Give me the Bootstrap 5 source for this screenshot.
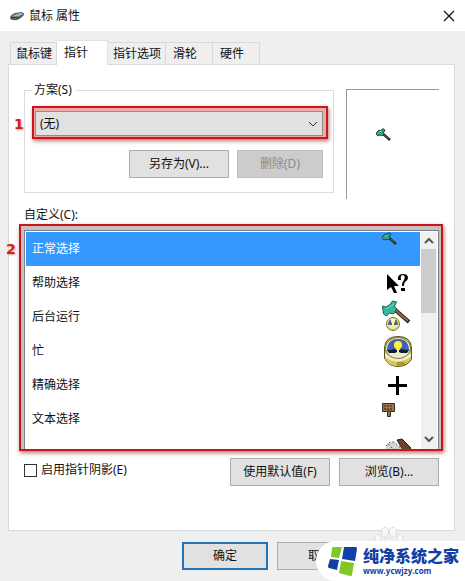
<!DOCTYPE html>
<html lang="zh-CN">
<head>
<meta charset="utf-8">
<meta name="viewport" content="width=device-width, initial-scale=1">
<title>鼠标 属性</title>
<link href="https://cdn.jsdelivr.net/npm/bootstrap@5.3.0/dist/css/bootstrap.min.css" rel="stylesheet">
<style>
body{font-family:"Noto Sans","Noto Sans CJK SC",sans-serif;font-size:12px;line-height:16px;color:#111;background:#efefef;min-height:100vh;overflow:hidden}
.titlebar{height:31px;padding:0 9px}
.titlebar h1{font-size:12px;line-height:16px;font-weight:400}
.closer{width:14px;height:14px}
.sheet{margin:9px 10px 11px 8px}
.tabs{padding-left:2px;height:24px;border:0}
.tabs .nav-link{height:22px;padding:0 4px 0 5px;border:1px solid #d9d9d9;border-left-width:0;border-bottom:0;border-radius:0;background:#efefef;color:#111;line-height:22px;text-align:left;margin:0}
.tabs .nav-item:first-child .nav-link{border-left-width:1px}
.tabs .wide{padding:0 15px 0 7px}
.tabs .nav-link.active{height:25px;width:51px;padding:0 7px;margin-bottom:-1px;background:#fff;color:#111;position:relative}
.panel{border:1px solid #d9d9d9;padding:17px 15px 44px}
.group{border:1px solid #dcdcdc;padding:0 5px 0 7px;height:111px;min-width:0}
.group legend{float:none;width:auto;font-size:12px;line-height:16px;padding:0 4px 0 2px;margin:0;height:16px}
.preview{flex:0 0 93px;height:110px;margin-top:7px;border-top:1px solid #999;border-left:1px solid #999;padding:38px 0 0 29px}
.marked{border:2px solid #c4181c;box-shadow:1px 2px 4px rgba(130,30,30,.6);position:relative}
.mark-select{background:#f4aaa4;padding:3px 3px 1px 1px}
.mark-list{background:#cabfbd;padding:4px 2px 0 3px;margin:0 -4px 0 -5px}
.step{position:absolute;color:#d2201f;font:bold 14px/16px "DejaVu Sans",sans-serif;text-shadow:1px 1px 2px #d99}
.step-one{left:-20px;top:8px}
.step-two{left:-15px;top:15px}
.scheme{height:25px;padding:0 24px 0 4px;border:1px solid #8d8d8d;border-radius:0;background-color:#e1e1e1;font-size:12px;line-height:16px;color:#111;background-image:url("data:image/svg+xml,%3csvg xmlns='http://www.w3.org/2000/svg' viewBox='0 0 10 10'%3e%3cpath fill='none' stroke='%23333' d='M1 3l4 4 4-4'/%3e%3c/svg%3e");background-size:10px;background-position:right 4px center}
.scheme-actions{padding:11px 5px 0 0}
.push{height:28px;width:100px;padding:0;border:1px solid #adadad;border-radius:0;background:#e1e1e1;color:#111;font-size:12px;line-height:16px}
.push.narrow{width:86px}
.push:disabled{background:#ccc;border-color:#bfbfbf;color:#8b8b8b;opacity:1}
.push.primary{border:2px solid #2473b5}
.caption{margin:8px 0 1px}
.listing{height:219px;border:1px solid #7d828a;border-bottom:0;padding:1px 1px 0 1px}
.listing .list-group-item{flex:none;height:34px;padding:0 6px;border:0;border-radius:0;font-size:12px;line-height:16px;color:#111}
.listing .list-group-item.active{background:#3399ff;color:#fff;margin:0}
.scroll{width:16px;margin-left:1px;background:#f0f0f0}
.scroll button{width:16px;height:17px}
.thumb{height:64px;margin-right:1px;background:#cdcdcd}
.options{margin-top:7px}
.spaced{gap:9px}
.form-check-input.tick{width:13px;height:13px;border:1px solid #333;border-radius:0;margin:0}
.actions{padding-left:182px}
.brand{position:absolute;right:0;bottom:0;width:149px;height:40px;padding:5px 0 3px 11px;border-radius:20px 0 0 20px;background:#fff;color:#123fa6}
.brand-name{font:900 16px/19px "Noto Sans CJK SC",sans-serif;white-space:nowrap}
.brand-url{font:bold 8px/12px "Open Sans",sans-serif;color:#123fa6}
.paw{position:absolute;right:61px;bottom:33px}
svg{display:block;flex:none}
</style>
</head>
<body class="position-relative d-flex flex-column">
<svg width="0" height="0" class="position-absolute" aria-hidden="true">
  <symbol id="axe" viewBox="0 0 15 14">
    <path d="M6 5l8 7" stroke="#30291d" stroke-width="2.4"/>
    <path d="M7 6l6 5" stroke="#79663a" stroke-width=".7"/>
    <path d="M1 4l2-2 2 1 1-2h2l1 2-2 1 1 2-2 2-2-1-2 1-2-2z" fill="#36a58c" stroke="#174b45"/>
    <path d="M3 4l3-1" stroke="#6bd0b1"/>
  </symbol>
</svg>
<header class="titlebar bg-white d-flex align-items-center">
  <svg class="me-1" width="16" height="12" viewBox="0 0 16 12" aria-hidden="true"><path d="M1 8Q1 5 6 3l6-1q4 1 3 3-2 3-7 5-6 1-7-2z" fill="#55636b"/><path d="M3 6l8-3q3 0 3 1-3 2-8 3z" fill="#a9b9bd"/><path d="M2 8l5-1 3 2" fill="none" stroke="#303c43"/></svg>
  <h1 class="m-0">鼠标 属性</h1>
  <button type="button" class="closer border-0 bg-transparent p-0 ms-auto" aria-label="关闭"><svg width="14" height="14" viewBox="0 0 14 14"><path d="M2 2l10 10M12 2L2 12" stroke="#111" stroke-width="1.2"/></svg></button>
</header>
<main class="sheet">
  <ul class="tabs nav nav-tabs flex-nowrap align-items-end" role="tablist">
    <li class="nav-item"><button type="button" class="nav-link" role="tab">鼠标键</button></li>
    <li class="nav-item"><button type="button" class="nav-link active" role="tab" aria-selected="true">指针</button></li>
    <li class="nav-item"><button type="button" class="nav-link" role="tab">指针选项</button></li>
    <li class="nav-item"><button type="button" class="nav-link wide" role="tab">滑轮</button></li>
    <li class="nav-item"><button type="button" class="nav-link wide" role="tab">硬件</button></li>
  </ul>
  <section class="panel bg-white">
    <div class="d-flex align-items-start">
      <fieldset class="group flex-grow-1 me-2">
        <legend>方案(S)</legend>
        <div class="marked mark-select mt-2">
          <span class="step step-one">1</span>
          <select class="scheme form-select" aria-label="方案(S)"><option>(无)</option></select>
        </div>
        <div class="scheme-actions d-flex justify-content-end gap-2">
          <button type="button" class="push btn">另存为(V)...</button>
          <button type="button" class="push narrow btn" disabled>删除(D)</button>
        </div>
      </fieldset>
      <div class="preview ms-1"><svg width="15" height="14"><use href="#axe"/></svg></div>
    </div>
    <div class="caption" id="custom">自定义(C):</div>
    <div class="marked mark-list">
      <span class="step step-two">2</span>
      <div class="listing bg-white d-flex overflow-hidden">
        <div class="list-group rounded-0 flex-grow-1 overflow-hidden" role="listbox" aria-labelledby="custom">
          <button type="button" role="option" aria-selected="true" class="list-group-item active d-flex align-items-center justify-content-between">正常选择<svg width="32" height="34"><use href="#axe" width="15" height="14"/></svg></button>
          <button type="button" role="option" class="list-group-item d-flex align-items-center justify-content-between">帮助选择<svg width="32" height="34" viewBox="0 0 32 34"><path d="M5 8v16l4-3 3 6h3l-3-7h5z"/><path d="M16 14v-3q1-3 5-3 5 0 5 4 0 2-3 4-1 1-1 4h-2q0-4 2-6 2-4-1-5-3 0-2 5z"/><path d="M19 22h4v3h-4z"/></svg></button>
          <button type="button" role="option" class="list-group-item d-flex align-items-center justify-content-between">后台运行<svg width="32" height="34" viewBox="0 0 32 34"><path d="M11 8l16 14" stroke="#30251a" stroke-width="4"/><path d="M12 9l14 12" stroke="#8f6c45" stroke-width="2"/><path d="M.5 6l3 1 4-2 3-4 4 1-2 4 2 3-3 5-4-1-3 3-3-2z" fill="#39b99b" stroke="#176251"/><path d="M4 9l8-5" stroke="#72d9bb"/><circle cx="11" cy="24" r="6.500" fill="#eeeaa8" stroke="#77721d"/><path d="M6 25q0-6 5-6t5 6z" fill="#53618b"/><path d="M9 19h4v3l-1 1v3h-2v-3l-1-1z" fill="#fff6a2"/><path d="M6 27q5 5 10 0" fill="none" stroke="#c8c05c"/></svg></button>
          <button type="button" role="option" class="list-group-item d-flex align-items-center justify-content-between">忙<svg width="32" height="34" viewBox="0 0 32 34"><path d="M2.500 14Q3 2.500 16 2.500T29.500 14v11q-4 7.500-14 7.500-10-.5-13-8.500z" fill="#c6bb4b" stroke="#55501a"/><path d="M3 19q12 11 26 0v4q-4 5-14 5-9 0-12-5z" fill="#f0edca"/><path d="M3 23q12 9 26 0v2q-4 7-14 7-9 0-12-7z" fill="#d0c75e"/><path d="M15 28h8v3l-8 1z" fill="#a99a28"/><ellipse cx="16" cy="14" rx="12.500" ry="10.500" fill="#f0edca" stroke="#817c3c"/><path d="M5 17Q5 5 16 5t11 12h-9v-2h-4v2z" fill="#4060b5"/><path d="M5 16h4l2-1 4 1v2l-2 1H7zM27 16h-4l-2-1-4 1v2l2 1h6z" fill="#111b38"/><circle cx="16" cy="11" r="4" fill="#fff52e"/></svg></button>
          <button type="button" role="option" class="list-group-item d-flex align-items-center justify-content-between">精确选择<svg width="32" height="34" viewBox="0 0 32 34"><path d="M14 8h3v8h8v3h-8v8h-3v-8H6v-3h8z"/></svg></button>
          <button type="button" role="option" class="list-group-item d-flex align-items-center justify-content-between">文本选择<svg width="32" height="34" viewBox="0 0 32 34"><path d="M.5 1.500h12v8h-4v5h-3v-5h-5z" fill="#9a7450" stroke="#3c2a1c"/><path d="M2 4h9M2 7h9" stroke="#34251a" stroke-dasharray="2 1"/><path d="M5 9h4" stroke="#3c2a1c"/></svg></button>
          <button type="button" role="option" aria-label="手写" class="list-group-item d-flex align-items-center justify-content-end"><svg width="32" height="34" viewBox="0 0 32 34"><path d="M15 4l5-1 9 9-3 4h-4z" fill="#70402d" stroke="#2e1b15"/><path d="M4 10l4-4h4l9 8H3z" fill="#d7d3d0"/><path d="M4 10l4-4h4l9 8M6 8l5 5" fill="none" stroke="#555" stroke-dasharray="2 2"/></svg></button>
        </div>
        <div class="scroll d-flex flex-column">
          <button type="button" class="border-0 bg-transparent p-0" aria-label="向上"><svg width="16" height="17"><path d="M4 11l4-4 4 4" fill="none" stroke="#555" stroke-width="2"/></svg></button>
          <div class="thumb"></div>
          <button type="button" class="border-0 bg-transparent p-0 mt-auto" aria-label="向下"><svg width="16" height="17"><path d="M4 5l4 4 4-4" fill="none" stroke="#555" stroke-width="2"/></svg></button>
        </div>
      </div>
    </div>
    <div class="options spaced d-flex align-items-start">
      <div class="d-flex align-items-center pt-1 me-auto"><input class="tick form-check-input" type="checkbox" id="shadow"><label class="ms-1" for="shadow">启用指针阴影(E)</label></div>
      <button type="button" class="push btn">使用默认值(F)</button>
      <button type="button" class="push btn">浏览(B)...</button>
    </div>
  </section>
</main>
<footer class="actions spaced d-flex">
  <button type="button" class="push narrow primary btn">确定</button>
  <button type="button" class="push narrow btn">取消</button>
</footer>
<svg class="paw" width="30" height="22" viewBox="0 0 30 22" fill="#f8f8f8" stroke="#dedede" aria-hidden="true"><ellipse cx="11" cy="6" rx="3.500" ry="5"/><ellipse cx="19" cy="6" rx="3.500" ry="5"/><ellipse cx="4" cy="12" rx="3" ry="4"/><ellipse cx="26" cy="12" rx="3" ry="4"/><path d="M15 12q5 1 8 10H7q3-9 8-10z"/></svg>
<div class="brand d-flex">
  <svg width="32" height="31" viewBox="0 0 32 31" aria-hidden="true"><path d="M7 1h8l-3 11-8-1 1-9q0-1 2-1z" fill="#80c729"/><path d="M17 1h12q1 0 1 2l-2 12-13-2z" fill="#123fa6"/><path d="M3 13l9 1-2 10-8-2q-1 0-1-2z" fill="#123fa6"/><path d="M14 15l13 2-2 12q0 1-2 1l-11-3z" fill="#80c729"/></svg>
  <div class="d-flex flex-column ms-1"><span class="brand-name">纯净系统之家</span><a class="brand-url text-decoration-none" href="#">www.ycwjzy.com</a></div>
</div>
<script src="https://cdn.jsdelivr.net/npm/bootstrap@5.3.0/dist/js/bootstrap.bundle.min.js"></script>
</body>
</html>
